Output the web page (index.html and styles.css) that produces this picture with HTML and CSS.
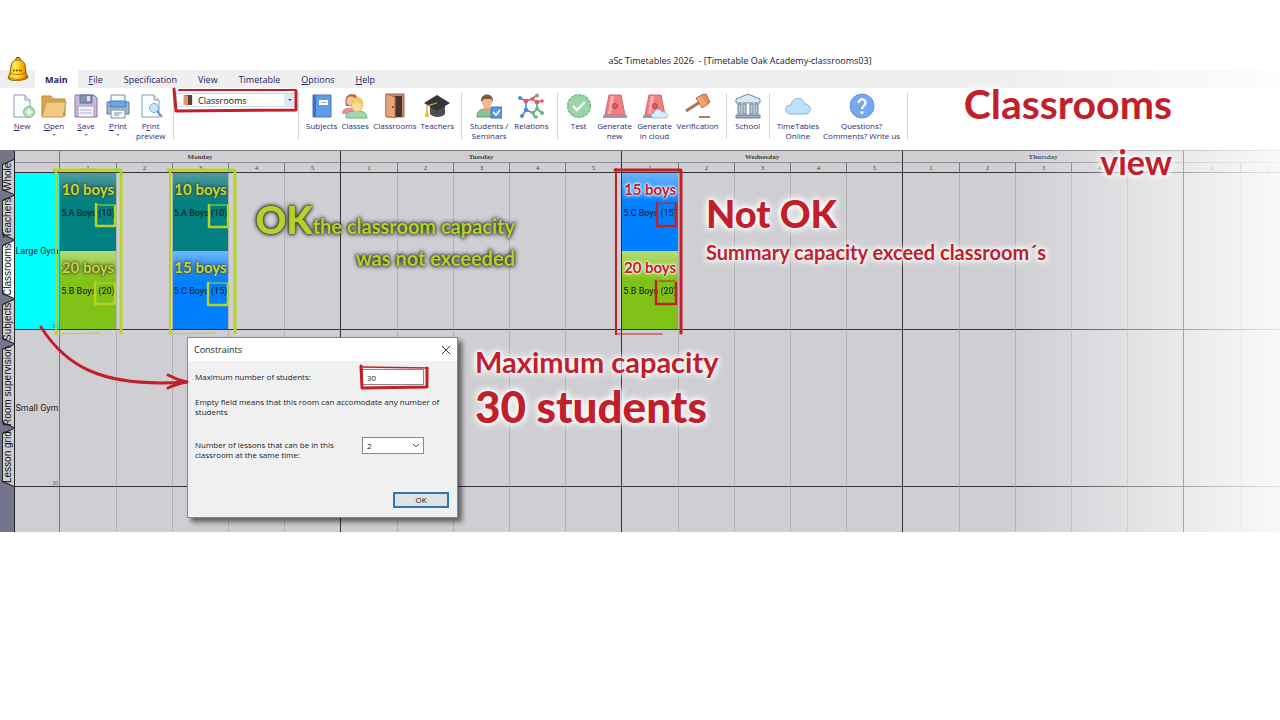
FILE: index.html
```html
<!DOCTYPE html>
<html lang="en">
<head>
    <meta charset="UTF-8">
    <meta name="viewport" content="width=device-width, initial-scale=1.0">
    <title>aSc Timetables 2026</title>
    <link rel="stylesheet" href="styles.css">
</head>
<body>

<div class="app">
    <header class="header">
        <svg class="bell" viewBox="0 0 22 26">
            <defs>
                <linearGradient id="gold" x1="0" x2="1">
                    <stop offset="0" stop-color="#f9a800"/>
                    <stop offset=".35" stop-color="#fff04a"/>
                    <stop offset=".7" stop-color="#ffb400"/>
                    <stop offset="1" stop-color="#d26a00"/>
                </linearGradient>
            </defs>
            <circle cx="11" cy="3.500" r="2.200" fill="#ffd23a" stroke="#4a2c00"/>
            <path d="M4 10C4 2 17 2 18 9l1 8 2 4c-1 4-19 5-20 1l2-5z" fill="url(#gold)" stroke="#6b4000" stroke-width=".8"/>
            <path d="M3 17c4 2 12 2 16-.5M1.500 21c4 3 15 3 19 0" fill="none" stroke="#a85a00" stroke-width=".8"/>
            <path d="M6 14.500h2m1 0h2m1 0h3" stroke="#7a4500" stroke-width="1.500"/>
            <path d="M8 23.500c1 2 4 2 5 0z" fill="#c77700"/>
        </svg>
        <div class="title">aSc Timetables 2026&nbsp; - [Timetable Oak Academy-classrooms03]</div>
        <nav class="menu">
            <button class="menu-item active">Main</button>
            <button class="menu-item"><u>F</u>ile</button>
            <button class="menu-item">Specification</button>
            <button class="menu-item">View</button>
            <button class="menu-item">Timetable</button>
            <button class="menu-item"><u>O</u>ptions</button>
            <button class="menu-item"><u>H</u>elp</button>
        </nav>
    </header>

    <div class="ribbon">
        <div class="group files">
            <button class="tool">
                <svg viewBox="0 0 26 26"><path d="M5 2h11l5 5v17H5z" fill="#fbfcfe" stroke="#8a9bb5"/><path d="M16 2v5h5" fill="#dfe6f0" stroke="#8a9bb5"/><circle cx="20" cy="19" r="5.500" fill="#b5e3b8" stroke="#6db981"/><path d="M20 16v6m-3-3h6" stroke="#fff" stroke-width="1.600"/></svg>
                <span><u>N</u>ew</span>
            </button>
            <button class="tool drop">
                <svg viewBox="0 0 26 26"><path d="M1 3h9l2 3h12v17H1z" fill="#d8a653" stroke="#b8873c"/><path d="M5 9h20l-3 15H1z" fill="#f3c982" stroke="#c49448"/></svg>
                <span><u>O</u>pen</span>
            </button>
            <button class="tool drop">
                <svg viewBox="0 0 26 26"><path d="M2 2h19l3 3v19H2z" fill="#c9b9df" stroke="#8676a5"/><path d="M7 2h12v8H7z" fill="#8793ac" stroke="#63708b"/><path d="M14 3h3v5h-3z" fill="#dde3ee"/><path d="M5 13h16v11H5z" fill="#f5f3fa" stroke="#a395bd"/><path d="M7 17h12M7 20h12" stroke="#b9b0c9"/></svg>
                <span><u>S</u>ave</span>
            </button>
            <button class="tool drop">
                <svg viewBox="0 0 26 26"><path d="M6 2h14v8H6z" fill="#f5f8fc" stroke="#7f8da3"/><path d="M2 9h22v12H2z" fill="#a8b9cf" stroke="#62768f"/><path d="M5 8h16v6H5z" fill="#69a7e8" stroke="#4381c4"/><path d="M6 17h14v8H6z" fill="#f8fafd" stroke="#7f8da3"/><path d="M9 20h8m-8 2h5" stroke="#7f8da3"/></svg>
                <span><u>P</u>rint</span>
            </button>
            <button class="tool">
                <svg viewBox="0 0 26 26"><path d="M4 2h12l5 5v17H4z" fill="#fbfcfe" stroke="#8a9bb5"/><path d="M16 2v5h5" fill="#dfe6f0" stroke="#8a9bb5"/><circle cx="16" cy="15" r="4.500" fill="#c7e8fa" stroke="#76a9d0"/><path d="M19 18l5 6" stroke="#6e9fc6" stroke-width="2.200"/></svg>
                <span>P<u>r</u>int<br>preview</span>
            </button>
        </div>
        <div class="group picker">
            <div class="view-box">
                <svg viewBox="0 0 12 14"><path d="M1 1h10v12H1z" fill="#5d4037"/><path d="M1 1l5 1v12l-5-1z" fill="#e5976c"/></svg>
                <select class="view-select" aria-label="View"><option>Classrooms</option></select>
                <i class="view-arrow"></i>
            </div>
        </div>
        <div class="group">
            <button class="tool">
                <svg viewBox="0 0 26 26"><path d="M4 2h18v22H4z" fill="#629be5" stroke="#4479be"/><path d="M4 2h3v22H4z" fill="#3f73b8"/><path d="M10 7h9v5h-9z" fill="#fff"/><path d="M12 9.500h5" stroke="#8aaad4"/></svg>
                <span>Subjects</span>
            </button>
            <button class="tool">
                <svg viewBox="0 0 26 26"><path d="M4 13c-2-8 1-12 6-12s7 4 6 12z" fill="#b86a42"/><path d="M0 21c0-6 4-6 8-6s7 1 7 6z" fill="#f08b97"/><circle cx="9" cy="8" r="4.500" fill="#f8c9a0"/><path d="M4 25c0-7 5-7 10-7s11 0 11 7z" fill="#a2d8b0" stroke="#6fb487"/><ellipse cx="15" cy="12" rx="5.500" ry="7" fill="#fadd9c" stroke="#dfb355"/><path d="M9 11c0-9 13-9 12 0-4 0-6-2-7-4-1 3-3 4-5 4z" fill="#f1c75d"/></svg>
                <span>Classes</span>
            </button>
            <button class="tool">
                <svg viewBox="0 0 26 26"><path d="M4 1h18v23H4z" fill="#c98a68" stroke="#a46c4e"/><path d="M7 3h13v21H7z" fill="#49342f"/><path d="M4 1l9 3v21l-9-2z" fill="#e9a37b" stroke="#b97450"/><circle cx="11" cy="14" r="1" fill="#6b3e28"/></svg>
                <span>Classrooms</span>
            </button>
            <button class="tool">
                <svg viewBox="0 0 26 26"><path d="M6 12h15v9c-3 4-12 4-15 0z" fill="#4d4e53"/><path d="M13 2l13 8-13 8-13-8z" fill="#34363c"/><path d="M13 10L3 13v6" fill="none" stroke="#e3a52f" stroke-width="1.300"/><path d="M2 18h2l1 6H1z" fill="#f3b63f"/></svg>
                <span>Teachers</span>
            </button>
        </div>
        <div class="group roomy">
            <button class="tool">
                <svg viewBox="0 0 26 26"><path d="M1 24c0-7 4-8 10-8s9 2 9 8z" fill="#82c796" stroke="#5a9e73"/><path d="M8 13h6v5l-3 2-3-2z" fill="#dca175"/><ellipse cx="11" cy="9" rx="5" ry="6.500" fill="#f0b98a"/><path d="M5 9c-1-10 13-10 12 0l-2-3H8z" fill="#80583c"/><path d="M15 14h11v11H15z" fill="#5b96e2" stroke="#3e76c0"/><path d="M17 19l3 3 4-5" fill="none" stroke="#fff" stroke-width="1.600"/></svg>
                <span>Students /<br>Seminars</span>
            </button>
            <button class="tool">
                <svg viewBox="0 0 26 26"><g fill="none" stroke-width="1.700"><path d="M8 8l6-2 5 3" stroke="#e05665"/><path d="M19 9v7l-4 4" stroke="#56a578"/><path d="M15 20l-7-3V8" stroke="#5688d2"/><path d="M8 8L2 5m6 12l-4 6" stroke="#5688d2"/><path d="M14 6l5-4m0 7l6-1" stroke="#e05665"/><path d="M15 20l2 5m2-9l5 4" stroke="#56a578"/></g><g fill="#e05665"><circle cx="8" cy="8" r="2.300"/><circle cx="19" cy="9" r="2.300"/><circle cx="24" cy="8" r="1.800"/><circle cx="14" cy="6" r="1.800"/></g><g fill="#5688d2"><circle cx="2" cy="5" r="2"/><circle cx="8" cy="17" r="2.300"/><circle cx="4" cy="23" r="2"/></g><g fill="#65b586"><circle cx="19" cy="2.500" r="2"/><circle cx="19" cy="16" r="2"/><circle cx="15" cy="20" r="2"/><circle cx="24" cy="20" r="2"/><circle cx="18" cy="24" r="1.800"/></g></svg>
                <span>Relations</span>
            </button>
        </div>
        <div class="group">
            <button class="tool">
                <svg viewBox="0 0 26 26"><circle cx="13" cy="13" r="11.300" fill="#9bd5a5" stroke="#75ba85" stroke-width="1.500" stroke-dasharray="3 1"/><path d="M7 13l4 4 8-8" fill="none" stroke="#fff" stroke-width="2.400"/></svg>
                <span>Test</span>
            </button>
            <button class="tool wide">
                <svg viewBox="0 0 26 26"><path d="M7 2h12l4 20H3z" fill="#f17e83" stroke="#d8636b"/><path d="M9 3h3L9 21H6z" fill="#fbb0b1"/><circle cx="13" cy="13" r="2.500" fill="#e55e67" stroke="#a74750"/><path d="M1 22h24v3H1z" fill="#8f9eb5"/></svg>
                <span>Generate<br>new</span>
            </button>
            <button class="tool wide">
                <svg viewBox="0 0 26 26"><path d="M7 2h12l4 20H3z" fill="#f17e83" stroke="#d8636b"/><path d="M9 3h3L9 21H6z" fill="#fbb0b1"/><circle cx="13" cy="13" r="2.500" fill="#e55e67" stroke="#a74750"/><path d="M1 22h24v3H1z" fill="#8f9eb5"/><path d="M12 25c-4-1-3-5 0-5 1-5 7-4 8-1 6-1 7 6 3 6z" fill="#d7eefc" stroke="#97bfdf"/></svg>
                <span>Generate<br>in cloud</span>
            </button>
            <button class="tool wide">
                <svg viewBox="0 0 26 26"><path d="M1 18L15 9" stroke="#b4704d" stroke-width="3"/><path d="M11 5l6-3 6 9-6 4z" fill="#f2a66d" stroke="#b86d42"/><path d="M16 2l5-1 4 8-2 2" fill="#df8e57" stroke="#b86d42"/><path d="M14 24h11" stroke="#b17a5b" stroke-width="2"/></svg>
                <span>Verification</span>
            </button>
        </div>
        <div class="group">
            <button class="tool">
                <svg viewBox="0 0 26 26"><path d="M13 1l12 5v4H1V6z" fill="#d8e6f1" stroke="#71869d"/><path d="M3 11h3v10H3zm5 0h3v10H8zm7 0h3v10h-3zm5 0h3v10h-3z" fill="#c0cfde" stroke="#6c819b"/><path d="M1 22h24v3H1z" fill="#9daec2" stroke="#687c95"/></svg>
                <span>School</span>
            </button>
        </div>
        <div class="group">
            <button class="tool">
                <svg viewBox="0 0 26 26"><path d="M5 21c-6-1-6-9 1-9 1-8 12-9 14-1 7 1 7 9 1 10z" fill="#bce2fa" stroke="#80b5dc"/></svg>
                <span>TimeTables<br>Online</span>
            </button>
            <button class="tool">
                <svg viewBox="0 0 26 26"><circle cx="13" cy="13" r="12" fill="#75a8ed" stroke="#5e91d8"/><path d="M9.500 10c0-5 7.500-4.500 7 0 0 2.500-3.500 3-3.500 6" fill="none" stroke="#fff" stroke-width="2.200"/><circle cx="13" cy="19.500" r="1.500" fill="#fff"/></svg>
                <span>Questions?<br>Comments? Write us</span>
            </button>
        </div>
    </div>

    <main class="workspace">
        <div class="side-tabs">
            <button class="side-tab h-s">Whole</button>
            <button class="side-tab h-m">Teachers</button>
            <button class="side-tab h-l active">Classrooms</button>
            <button class="side-tab h-m">Subjects</button>
            <button class="side-tab h-xl">Room supervision</button>
            <button class="side-tab h-l">Lesson grid</button>
        </div>
        <div class="timetable-wrap">
            <table class="timetable" id="timetable">
                <colgroup id="cols"><col class="room-col"></colgroup>
                <thead>
                    <tr class="days" id="days"><th></th></tr>
                    <tr class="periods" id="periods"><th></th></tr>
                </thead>
                <tbody id="rooms"></tbody>
            </table>
        </div>

        <p class="note note-ok"><b>OK</b>the classroom capacity<br>was not exceeded</p>
        <p class="note note-bad"><b>Not OK</b><br>Summary capacity exceed classroom´s</p>
        <p class="note note-max">Maximum capacity<br><b>30 students</b></p>

        <form class="dialog" onsubmit="return false">
            <div class="dialog-title">
                <span>Constraints</span>
                <button type="button" class="close" aria-label="Close"><svg viewBox="0 0 10 10"><path d="M1 1l8 8M9 1L1 9" stroke="#333" fill="none"/></svg></button>
            </div>
            <div class="dialog-body">
                <div class="row">
                    <label for="max">Maximum number of students:</label>
                    <input type="text" id="max" value="30">
                </div>
                <p class="hint">Empty field means that this room can accomodate any number of students</p>
                <div class="row">
                    <label for="lessons">Number of lessons that can be in this classroom at the same time:</label>
                    <div class="select-box">
                        <select id="lessons"><option>2</option></select>
                        <svg viewBox="0 0 8 6"><path d="M1 1l3 3 3-3" stroke="#555" fill="none"/></svg>
                    </div>
                </div>
                <button type="submit" class="ok">OK</button>
            </div>
        </form>
    </main>

    <h1 class="note heading">Classrooms<br><span>view</span></h1>

    <!-- hand drawn marks over the screen -->
    <svg class="marks" width="1280" height="532" viewBox="0 0 1280 532" fill="none" stroke-linecap="round" stroke-linejoin="round">
        <g stroke="#b4d326">
            <path d="M56 334V170" stroke-width="2"/>
            <path d="M54 170H121V333" stroke-width="3"/>
            <path d="M55 334L100 333" stroke-width="1"/>
            <path d="M170 334V170" stroke-width="2"/>
            <path d="M168 170H235V333" stroke-width="3"/>
            <path d="M169 334L214 333" stroke-width="1"/>
            <path d="M96 204V226H115V206" stroke-width="2.500"/><path d="M97 205H115" stroke-width="1"/>
            <path d="M209 205V227H228V206" stroke-width="2.500"/><path d="M210 205H228" stroke-width="1"/>
            <path d="M95 282V304H115V284" stroke-width="2.500"/><path d="M96 283H115" stroke-width="1"/>
            <path d="M208 283V305H228V284" stroke-width="2.500"/><path d="M209 283H228" stroke-width="1"/>
        </g>
        <g stroke="#c1202a">
            <path d="M616 334V169" stroke-width="2"/>
            <path d="M615 170H681V333" stroke-width="3"/>
            <path d="M616 334L662 334" stroke-width="1"/>
            <path d="M657 203V226H676V204" stroke-width="2.500"/><path d="M660 203H675" stroke-width="1"/>
            <path d="M656 281V304H676V283" stroke-width="2.500"/><path d="M659 281H675" stroke-width="1"/>
            <path d="M174 89L176 111L296 110V91" stroke-width="3"/><path d="M179 90H296" stroke-width="2"/>
            <path d="M361 366L362 388L427 387V368" stroke-width="3"/><path d="M362 367L428 368" stroke-width="1.500"/>
            <path d="M41 327C65 365 100 388 186 382" stroke-width="3"/>
            <path d="M168 375Q177 380 187 382Q176 384 168 388" stroke-width="3"/>
        </g>
    </svg>
    <div class="fade"></div>
</div>

<script>
    const days = ['Monday', 'Tuesday', 'Wednesday', 'Thursday', 'Friday'];
    const perDay = 5;
    const rooms = [
        { name: 'Large Gym', cap: 30, lessons: {
            0: [['teal', '10 boys', '5.A Boys (10)'], ['green', '20 boys', '5.B Boys (20)']],
            2: [['teal', '10 boys', '5.A Boys (10)'], ['blue', '15 boys', '5.C Boys (15)']],
            10: [['blue over', '15 boys', '5.C Boys (15)'], ['green over', '20 boys', '5.B Boys (20)']]
        } },
        { name: 'Small Gym', cap: 30, lessons: {} },
        { name: '', cap: '', lessons: {} }
    ];

    let cols = '', heads = '', periods = '';
    days.forEach(day => {
        heads += `<th colspan="${perDay}">${day}</th>`;
        for (let i = 1; i <= perDay; i++) {
            cols += `<col class="${i === 1 ? 'first-col' : 'period-col'}">`;
            periods += `<th class="${i === perDay ? 'last' : ''}">${i}</th>`;
        }
    });
    document.getElementById('cols').innerHTML += cols;
    document.getElementById('days').innerHTML += heads;
    document.getElementById('periods').innerHTML += periods;

    document.getElementById('rooms').innerHTML = rooms.map((room, r) => {
        let cells = '';
        for (let i = 0; i < days.length * perDay; i++) {
            const cards = (room.lessons[i] || []).map(c =>
                `<div class="card ${c[0]}"><span class="count">${c[1]}</span><span>${c[2]}</span></div>`).join('');
            cells += `<td class="${i % perDay === perDay - 1 ? 'last' : ''}">${cards}</td>`;
        }
        return `<tr><th class="room ${r === 0 ? 'selected' : ''}"><div class="room-name">${room.name}<small>${room.cap}</small></div></th>${cells}</tr>`;
    }).join('');
</script>

</body>
</html>
```
FILE: styles.css
```css
* {
    box-sizing: border-box;
}
body {
    margin: 0;
    padding-top: 50px;
    background: #fff;
    font-family: "Open Sans", sans-serif;
    font-size: 9px;
    color: #222;
}
button, input, select {
    font: inherit;
    color: inherit;
    border: none;
    background: none;
    padding: 0;
    margin: 0;
}
p {
    margin: 0;
}
.app {
    position: relative;
    overflow: hidden;
}

/* title and menu */
.header {
    position: relative;
}
.bell {
    position: absolute;
    left: 7px;
    top: 6px;
    width: 22px;
    height: 26px;
}
.title {
    height: 20px;
    line-height: 22px;
    padding-left: 200px;
    text-align: center;
}
.menu {
    display: flex;
    gap: 1px;
    height: 18px;
    padding-left: 35px;
    background: #efefef;
    color: #1e2466;
}
.menu-item {
    padding: 0 10px;
}
.menu-item.active {
    background: #fff;
    font-weight: bold;
}

/* ribbon */
.ribbon {
    display: flex;
    height: 62px;
    padding-top: 5px;
    font-size: 8px;
    color: #1f2a7c;
}
.group {
    display: flex;
    align-items: flex-start;
    height: 46px;
    padding: 0 5px;
    border-right: 1px solid #d5d5d8;
}
.group.roomy {
    gap: 2px;
    padding: 0 6px;
}
.tool {
    display: flex;
    flex-direction: column;
    align-items: center;
    min-width: 32px;
    padding: 0 2px;
    line-height: 10px;
    white-space: nowrap;
    font-weight: 500;
}
.tool.wide {
    min-width: 40px;
}
.tool svg {
    width: 26px;
    height: 26px;
    margin-bottom: 2px;
}
.drop::after {
    content: "";
    margin-top: 3px;
    border: 2px solid transparent;
    border-top-color: #8088a8;
}
.files {
    width: 174px;
    padding-left: 6px;
}
.picker {
    width: 125px;
    padding: 0 2px;
}
.view-box {
    display: flex;
    align-items: center;
    width: 100%;
    height: 14px;
    padding-left: 6px;
    border: 1px solid #d5dae5;
    font-size: 9px;
    color: #111;
}
.view-box svg {
    width: 10px;
    height: 12px;
    margin-right: 5px;
}
.view-select, .select-box select {
    appearance: none;
    flex: 1;
    min-width: 0;
}
.view-arrow {
    display: flex;
    justify-content: center;
    align-items: center;
    width: 11px;
    height: 12px;
    background: #dbe8f5;
}
.view-arrow::after {
    content: "";
    margin-top: 2px;
    border: 2px solid transparent;
    border-top-color: #456;
}

/* workspace */
.workspace {
    position: relative;
    display: flex;
    height: 382px;
    border-top: 1px solid #77777c;
    background: #cfced3;
}
.side-tabs {
    flex: none;
    display: flex;
    flex-direction: column;
    width: 15px;
    padding: 8px 0 0 2px;
    border-right: 1px solid #222;
    background: #74758b;
}
.side-tab {
    position: relative;
    z-index: 0;
    writing-mode: vertical-rl;
    transform: rotate(180deg);
    font-family: "Liberation Sans", Arial, sans-serif;
    font-size: 10px;
    line-height: 12px;
    text-align: center;
    color: #111;
}
/* outline and fill of the slanted tab */
.side-tab::before, .side-tab::after {
    content: "";
    position: absolute;
    z-index: -1;
    inset: 0;
    background: #222;
    clip-path: polygon(0 0, 100% 5px, 100% calc(100% - 5px), 0 100%);
}
.side-tab::after {
    inset: 1px 1px 1px 0;
    background: #cfced3;
}
.side-tab.active::after {
    background: #fff;
}
.h-s { height: 36px; }
.h-m { height: 45px; }
.h-l { height: 59px; }
.h-xl { height: 84px; }

.timetable-wrap {
    flex: 1;
    min-width: 0;
    overflow: hidden;
}
.timetable {
    width: 1450px;
    table-layout: fixed;
    border-collapse: separate;
    border-spacing: 0;
    font-family: Roboto, "Liberation Sans", sans-serif;
}
.room-col { width: 45px; }
.first-col { width: 57px; }
.period-col { width: 56px; }
.timetable th, .timetable td {
    padding: 0;
    border-right: 1px solid #b3b2b7;
    border-bottom: 1px solid #333;
    font-weight: normal;
}
.timetable .days th, .timetable .periods th {
    font-family: "Liberation Serif", "Times New Roman", serif;
    font-size: 7px;
    line-height: 8px;
    color: #444;
}
.days th {
    height: 12px;
}
.periods th {
    height: 10px;
}
.timetable .days th {
    border-bottom-color: #8e8e93;
    border-right-color: #333;
    font-weight: bold;
}
.timetable .periods th {
    border-right-color: #77777c;
}
.timetable tr > th:first-child {
    border-right-color: #77777c;
}
.timetable .last, .timetable .periods .last {
    border-right-color: #333;
}
.timetable td, .timetable .room {
    height: 157px;
    vertical-align: top;
}
.room-name {
    position: relative;
    display: flex;
    align-items: center;
    justify-content: center;
    height: 156px;
    white-space: nowrap;
}
.room-name small {
    position: absolute;
    right: 1px;
    bottom: 0;
    font-size: 5px;
    color: #666;
}
.room.selected {
    background: #0ff;
}
.card {
    display: flex;
    flex-direction: column;
    align-items: center;
    height: 78px;
    padding-top: 4px;
    line-height: 24px;
    white-space: nowrap;
    color: #111;
}
.teal { background: linear-gradient(#4f9a9c, #008080 30px); }
.green { background: linear-gradient(#b4dc72, #80c217 30px); }
.blue { background: linear-gradient(#6fb4fb, #0080ff 30px); }
.count {
    font-family: Lato, sans-serif;
    font-size: 15px;
    font-weight: bold;
    color: #c4d82e;
    text-shadow: 0 0 2px #333, 0 0 4px #333;
}
.over .count {
    color: #c1202a;
    text-shadow: 0 0 2px #fff, 0 0 3px #fff, 0 0 4px #fff;
}

/* hand written notes */
.note {
    position: absolute;
    margin: 0;
    z-index: 3;
    font-family: Lato, sans-serif;
    font-weight: bold;
    font-size: 20px;
    line-height: 32px;
    white-space: nowrap;
    color: #c1202a;
    text-shadow: 0 0 3px #fff, 0 0 5px #fff, 0 0 8px #fff, 0 0 10px #fff;
}
.note b {
    font-size: 38px;
}
.note-ok {
    right: 765px;
    top: 52px;
    text-align: right;
    color: #b4d326;
    text-shadow: 0 0 2px #333, 0 0 4px #333, 0 0 5px #444;
}
.note-bad {
    left: 706px;
    top: 46px;
}
.note-max {
    left: 475px;
    top: 189px;
    font-size: 29px;
    line-height: 44px;
}
.note-max b {
    font-size: 44px;
}
.heading {
    top: 26px;
    right: 108px;
    font-size: 41px;
    line-height: 56px;
    text-align: right;
}
.heading span {
    font-size: 34px;
}
.marks {
    position: absolute;
    left: 0;
    top: -50px;
    z-index: 3;
    pointer-events: none;
}
.fade {
    position: absolute;
    inset: 0 0 0 auto;
    width: 270px;
    z-index: 2;
    background: linear-gradient(to right, rgba(255, 255, 255, 0), rgba(255, 255, 255, 0.88));
    pointer-events: none;
}

/* dialog */
.dialog {
    position: absolute;
    left: 187px;
    top: 186px;
    width: 271px;
    height: 181px;
    border: 1px solid #888;
    background: #f0f0f0;
    box-shadow: 4px 4px 5px rgba(0, 0, 0, 0.55);
    font-family: "Open Sans", sans-serif;
    font-size: 8px;
    line-height: 10px;
}
.dialog-title {
    display: flex;
    align-items: center;
    justify-content: space-between;
    height: 23px;
    padding: 0 6px;
    background: #fff;
    font-size: 9px;
}
.close {
    width: 10px;
    height: 10px;
}
.close svg {
    display: block;
}
.dialog-body {
    display: flex;
    flex-direction: column;
    padding: 8px 8px 8px 7px;
}
.row {
    display: flex;
    align-items: flex-start;
    justify-content: space-between;
    padding-right: 25px;
}
.row label {
    width: 150px;
    padding-top: 3px;
}
.row input {
    width: 62px;
    height: 16px;
    padding: 0 4px;
    border: 1px solid #888;
    background: #fff;
}
.hint {
    margin: 12px 0 20px;
}
.select-box {
    display: flex;
    align-items: center;
    width: 62px;
    height: 17px;
    padding: 0 3px 0 4px;
    border: 1px solid #888;
    background: #fff;
}
.select-box svg {
    width: 8px;
    height: 6px;
}
.ok {
    align-self: flex-end;
    width: 56px;
    height: 16px;
    margin-top: 32px;
    border: 2px solid #2d78b4;
    background: #e1e1e1;
}
```
